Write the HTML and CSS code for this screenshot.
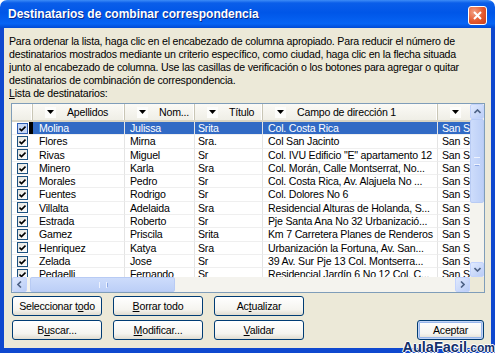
FILE: index.html
```html
<!DOCTYPE html>
<html lang="es">
<head>
    <meta charset="UTF-8">
    <title>Destinatarios de combinar correspondencia</title>
    <link rel="stylesheet" href="styles.css">
</head>
<body>
    <div class="window">
        <div class="titlebar">
            <span class="title">Destinatarios de combinar correspondencia</span>
            <span class="close">
                <svg width="9" height="9" viewBox="0 0 9 9"><path d="M1 1 L8 8 M8 1 L1 8" stroke="#fff" stroke-width="2" fill="none"/></svg>
            </span>
        </div>
        <div class="frame">
            <div class="client">
                <p class="intro">Para ordenar la lista, haga clic en el encabezado de columna apropiado. Para reducir el número de<br>destinatarios mostrados mediante un criterio específico, como ciudad, haga clic en la flecha situada<br>junto al encabezado de columna. Use las casillas de verificación o los botones para agregar o quitar<br>destinatarios de combinación de correspondencia.</p>
                <div class="list-label"><u>L</u>ista de destinatarios:</div>

                <div class="listbox">
                    <div class="list-top">
                        <div class="table">
                            <div class="row header">
                                <div class="hcell"></div>
                                <div class="hcell"><span class="drop"><svg width="7" height="4" viewBox="0 0 7 4"><path d="M0 0 H7 L3.5 4 Z"/></svg></span>Apellidos</div>
                                <div class="hcell"><span class="drop"><svg width="7" height="4" viewBox="0 0 7 4"><path d="M0 0 H7 L3.5 4 Z"/></svg></span>Nom...</div>
                                <div class="hcell"><span class="drop"><svg width="7" height="4" viewBox="0 0 7 4"><path d="M0 0 H7 L3.5 4 Z"/></svg></span>Título</div>
                                <div class="hcell"><span class="drop"><svg width="7" height="4" viewBox="0 0 7 4"><path d="M0 0 H7 L3.5 4 Z"/></svg></span>Campo de dirección 1</div>
                                <div class="hcell"><span class="drop"><svg width="7" height="4" viewBox="0 0 7 4"><path d="M0 0 H7 L3.5 4 Z"/></svg></span></div>
                            </div>

                            <div class="row selected">
                                <div class="cell check"><span class="box focus"><svg width="7" height="7" viewBox="0 0 7 7"><path d="M0.5 3.5 L2.5 5.5 L6.5 1.5" fill="none" stroke="#000" stroke-width="1.6"/></svg></span><span class="caret"></span></div>
                                <div class="cell">Molina</div><div class="cell">Julissa</div><div class="cell">Srita</div><div class="cell">Col. Costa Rica</div><div class="cell">San Salvador</div>
                            </div>
                            <div class="row">
                                <div class="cell check"><span class="box"><svg width="7" height="7" viewBox="0 0 7 7"><path d="M0.5 3.5 L2.5 5.5 L6.5 1.5" fill="none" stroke="#000" stroke-width="1.6"/></svg></span></div>
                                <div class="cell">Flores</div><div class="cell">Mirna</div><div class="cell">Sra.</div><div class="cell">Col San Jacinto</div><div class="cell">San Salvador</div>
                            </div>
                            <div class="row">
                                <div class="cell check"><span class="box"><svg width="7" height="7" viewBox="0 0 7 7"><path d="M0.5 3.5 L2.5 5.5 L6.5 1.5" fill="none" stroke="#000" stroke-width="1.6"/></svg></span></div>
                                <div class="cell">Rivas</div><div class="cell">Miguel</div><div class="cell">Sr</div><div class="cell">Col. IVU Edificio "E" apartamento 12</div><div class="cell">San Salvador</div>
                            </div>
                            <div class="row">
                                <div class="cell check"><span class="box"><svg width="7" height="7" viewBox="0 0 7 7"><path d="M0.5 3.5 L2.5 5.5 L6.5 1.5" fill="none" stroke="#000" stroke-width="1.6"/></svg></span></div>
                                <div class="cell">Minero</div><div class="cell">Karla</div><div class="cell">Sra</div><div class="cell">Col. Morán, Calle Montserrat, No...</div><div class="cell">San Salvador</div>
                            </div>
                            <div class="row">
                                <div class="cell check"><span class="box"><svg width="7" height="7" viewBox="0 0 7 7"><path d="M0.5 3.5 L2.5 5.5 L6.5 1.5" fill="none" stroke="#000" stroke-width="1.6"/></svg></span></div>
                                <div class="cell">Morales</div><div class="cell">Pedro</div><div class="cell">Sr</div><div class="cell">Col. Costa Rica, Av. Alajuela No ...</div><div class="cell">San Salvador</div>
                            </div>
                            <div class="row">
                                <div class="cell check"><span class="box"><svg width="7" height="7" viewBox="0 0 7 7"><path d="M0.5 3.5 L2.5 5.5 L6.5 1.5" fill="none" stroke="#000" stroke-width="1.6"/></svg></span></div>
                                <div class="cell">Fuentes</div><div class="cell">Rodrigo</div><div class="cell">Sr</div><div class="cell">Col. Dolores No 6</div><div class="cell">San Salvador</div>
                            </div>
                            <div class="row">
                                <div class="cell check"><span class="box"><svg width="7" height="7" viewBox="0 0 7 7"><path d="M0.5 3.5 L2.5 5.5 L6.5 1.5" fill="none" stroke="#000" stroke-width="1.6"/></svg></span></div>
                                <div class="cell">Villalta</div><div class="cell">Adelaida</div><div class="cell">Sra</div><div class="cell">Residencial Alturas de Holanda, S...</div><div class="cell">San Salvador</div>
                            </div>
                            <div class="row">
                                <div class="cell check"><span class="box"><svg width="7" height="7" viewBox="0 0 7 7"><path d="M0.5 3.5 L2.5 5.5 L6.5 1.5" fill="none" stroke="#000" stroke-width="1.6"/></svg></span></div>
                                <div class="cell">Estrada</div><div class="cell">Roberto</div><div class="cell">Sr</div><div class="cell">Pje Santa Ana No 32 Urbanizació...</div><div class="cell">San Salvador</div>
                            </div>
                            <div class="row">
                                <div class="cell check"><span class="box"><svg width="7" height="7" viewBox="0 0 7 7"><path d="M0.5 3.5 L2.5 5.5 L6.5 1.5" fill="none" stroke="#000" stroke-width="1.6"/></svg></span></div>
                                <div class="cell">Gamez</div><div class="cell">Priscila</div><div class="cell">Srita</div><div class="cell">Km 7 Carretera Planes de Renderos</div><div class="cell">San Salvador</div>
                            </div>
                            <div class="row">
                                <div class="cell check"><span class="box"><svg width="7" height="7" viewBox="0 0 7 7"><path d="M0.5 3.5 L2.5 5.5 L6.5 1.5" fill="none" stroke="#000" stroke-width="1.6"/></svg></span></div>
                                <div class="cell">Henriquez</div><div class="cell">Katya</div><div class="cell">Sra</div><div class="cell">Urbanización la Fortuna, Av. San...</div><div class="cell">San Salvador</div>
                            </div>
                            <div class="row">
                                <div class="cell check"><span class="box"><svg width="7" height="7" viewBox="0 0 7 7"><path d="M0.5 3.5 L2.5 5.5 L6.5 1.5" fill="none" stroke="#000" stroke-width="1.6"/></svg></span></div>
                                <div class="cell">Zelada</div><div class="cell">Jose</div><div class="cell">Sr</div><div class="cell">39 Av. Sur Pje 13 Col. Montserra...</div><div class="cell">San Salvador</div>
                            </div>
                            <div class="row">
                                <div class="cell check"><span class="box"><svg width="7" height="7" viewBox="0 0 7 7"><path d="M0.5 3.5 L2.5 5.5 L6.5 1.5" fill="none" stroke="#000" stroke-width="1.6"/></svg></span></div>
                                <div class="cell">Pedaelli</div><div class="cell">Fernando</div><div class="cell">Sr</div><div class="cell">Residencial Jardín 6 No 12 Col. C...</div><div class="cell">San Salvador</div>
                            </div>
                        </div>

                        <div class="vscroll">
                            <span class="sbtn"><svg width="7" height="5" viewBox="0 0 7 5"><path d="M0.5 4 L3.5 1 L6.5 4" fill="none" stroke="#4D6185" stroke-width="1.6"/></svg></span>
                            <span class="vthumb"><span class="grip-v"></span></span>
                            <span class="track"></span>
                            <span class="sbtn"><svg width="7" height="5" viewBox="0 0 7 5"><path d="M0.5 1 L3.5 4 L6.5 1" fill="none" stroke="#4D6185" stroke-width="1.6"/></svg></span>
                        </div>
                    </div>
                    <div class="list-bottom">
                        <div class="hscroll">
                            <span class="sbtn"><svg width="5" height="7" viewBox="0 0 5 7"><path d="M4 0.5 L1 3.5 L4 6.5" fill="none" stroke="#4D6185" stroke-width="1.6"/></svg></span>
                            <span class="hthumb"><span class="grip-h"></span></span>
                            <span class="track"></span>
                            <span class="sbtn"><svg width="5" height="7" viewBox="0 0 5 7"><path d="M1 0.5 L4 3.5 L1 6.5" fill="none" stroke="#4D6185" stroke-width="1.6"/></svg></span>
                        </div>
                        <div class="corner"></div>
                    </div>
                </div>

                <div class="actions">
                    <div class="btn-grid">
                        <button class="btn">Seleccionar t<u>o</u>do</button>
                        <button class="btn"><u>B</u>orrar todo</button>
                        <button class="btn">Ac<u>t</u>ualizar</button>
                        <button class="btn">B<u>u</u>scar...</button>
                        <button class="btn"><u>M</u>odificar...</button>
                        <button class="btn"><u>V</u>alidar</button>
                    </div>
                    <button class="btn default">Aceptar</button>
                </div>
            </div>
        </div>
        <div class="watermark">AulaFacil<span class="dotcom">.com</span></div>
    </div>
</body>
</html>
```

FILE: styles.css
```css
body {
    margin: 0;
    background: #fff;
    font-family: "Liberation Sans", Arial, sans-serif;
    font-size: 10.6px;
    letter-spacing: -0.2px;
    color: #000;
}

.window {
    width: 495px;
    height: 353px;
    display: flex;
    flex-direction: column;
    border-radius: 7px 7px 0 0;
    overflow: hidden;
    position: relative;
}

/* title bar */
.titlebar {
    height: 28px;
    flex: none;
    display: flex;
    align-items: center;
    justify-content: space-between;
    padding: 0 8px 0 8px;
    background: linear-gradient(#3d8cf7 0, #0a5ee9 3px, #0056e8 45%, #0664f4 85%, #004ad4 100%);
}

.title {
    color: #fff;
    font-weight: bold;
    font-size: 12px;
    letter-spacing: 0;
    text-shadow: 1px 1px 0 #0a2a8c;
}

.close {
    width: 17px;
    height: 17px;
    border: 1px solid #fff;
    border-radius: 3px;
    background: radial-gradient(circle at 30% 30%, #f3a083 0, #e3582e 55%, #c8401c 100%);
    display: flex;
    align-items: center;
    justify-content: center;
    margin-top: 3px;
}

/* window frame and client */
.frame {
    flex: 1;
    background: #0f48cf;
    padding: 0 4px 5px 4px;
    display: flex;
}

.client {
    flex: 1;
    min-width: 0;
    overflow: hidden;
    background: #ece9d8;
    padding: 7px 6px 0 5px;
}

.intro {
    margin: 0;
    line-height: 13px;
    white-space: nowrap;
}

.list-label {
    line-height: 13px;
}

/* list box */
.listbox {
    margin: 3px 0 0 2px;
    width: 474px;
    height: 190px;
    box-sizing: border-box;
    border: 1px solid #7f9db9;
    background: #fff;
    display: flex;
    flex-direction: column;
}

.list-top {
    display: flex;
    height: 173px;
}

.table {
    width: 458px;
    overflow: hidden;
}

.row {
    display: grid;
    grid-template-columns: 21px 92px 70px 68px 175px 60px;
    height: 13.3px;
    line-height: 13px;
}

.row.header {
    height: 18px;
    line-height: 15px;
    background: linear-gradient(#fbfaf6, #efeee6);
    border-bottom: 2px solid #d8d4c4;
    box-sizing: border-box;
}

.hcell {
    display: flex;
    align-items: center;
    padding-left: 12px;
    white-space: nowrap;
    overflow: hidden;
    border-right: 1px solid #c9c6b6;
    box-shadow: inset -1px 0 0 #fff;
}

.hcell:first-child {
    padding-left: 0;
}

.drop {
    width: 11px;
    height: 11px;
    flex: none;
    margin-right: 11px;
    background: #fdfdfb;
    display: flex;
    align-items: center;
    justify-content: center;
}

.cell {
    box-sizing: border-box;
    padding-left: 5px;
    white-space: nowrap;
    overflow: hidden;
    border-right: 1px solid #e4e4e4;
    border-bottom: 1px solid #efefef;
}

.cell:nth-child(2) {
    padding-left: 6px;
}

.cell:nth-child(4) {
    padding-left: 3px;
}

.cell:nth-child(6) {
    padding-left: 4px;
}

.selected .cell {
    background: #316ac5;
    color: #fff;
}

.selected .cell.check {
    background: #fff;
}

.cell.check {
    padding-left: 5px;
    display: flex;
    align-items: center;
    border-right: none;
}

.box {
    width: 11px;
    height: 11px;
    box-sizing: border-box;
    border: 1px solid #1c5180;
    background: linear-gradient(135deg, #e2e2dc, #fff);
    display: flex;
    align-items: center;
    justify-content: center;
}

.box.focus {
    border-color: #2f5fb5;
    background: #c6d7f5;
}

.caret {
    width: 4px;
    height: 12px;
    margin-left: 1px;
    background: #000;
}

/* scroll bars */
.vscroll {
    width: 14px;
    display: flex;
    flex-direction: column;
    background: #f4f3ee;
}

.hscroll {
    width: 458px;
    display: flex;
    background: #f4f3ee;
}

.sbtn {
    flex: none;
    width: 14px;
    height: 15px;
    box-sizing: border-box;
    border: 1px solid #c3d3fd;
    border-radius: 2px;
    background: linear-gradient(135deg, #e1eafe, #b9ccf6);
    display: flex;
    align-items: center;
    justify-content: center;
}

.hscroll .sbtn {
    width: 15px;
    height: 15px;
}

.vthumb {
    height: 84px;
    box-sizing: border-box;
    border: 1px solid #b8cbf4;
    border-radius: 2px;
    background: linear-gradient(90deg, #cddcfb, #bccff7);
    display: flex;
    align-items: center;
    justify-content: center;
}

.hthumb {
    width: 145px;
    margin-left: 3px;
    box-sizing: border-box;
    border: 1px solid #b8cbf4;
    border-radius: 2px;
    background: linear-gradient(#cddcfb, #bccff7);
    display: flex;
    align-items: center;
    justify-content: center;
}

.grip-v {
    width: 6px;
    height: 6px;
    border-top: 1px solid #eef3fe;
    border-bottom: 1px solid #eef3fe;
    box-shadow: 0 2px 0 -1px #8faae6;
}

.grip-h {
    width: 6px;
    height: 6px;
    border-left: 1px solid #eef3fe;
    border-right: 1px solid #eef3fe;
    box-shadow: 2px 0 0 -1px #8faae6;
}

.track {
    flex: 1;
}

.list-bottom {
    display: flex;
    height: 15px;
}

.corner {
    flex: 1;
    background: #ece9d8;
}

/* buttons */
.actions {
    display: flex;
    justify-content: space-between;
    align-items: flex-end;
    margin: 3px 1px 0 3px;
}

.btn-grid {
    display: grid;
    grid-template-columns: 90px 90px 90px;
    column-gap: 11px;
    row-gap: 4px;
}

.btn {
    height: 20px;
    padding: 0;
    border: 1px solid #003c74;
    border-radius: 3px;
    background: linear-gradient(#ffffff, #f5f4ef 70%, #e0dcd1 100%);
    font-family: "Liberation Sans", Arial, sans-serif;
    font-size: 10.6px;
    letter-spacing: -0.2px;
    color: #000;
}

.btn.default {
    width: 67px;
    box-shadow: inset 0 0 0 1px #c2d4f5, inset 0 0 0 2px #98b6eb;
}

.watermark {
    position: absolute;
    right: 0;
    bottom: -2px;
    font-weight: bold;
    font-size: 14.5px;
    letter-spacing: 0;
    color: #14306a;
    text-shadow: 1px 0 0 #fff, -1px 0 0 #fff, 0 1px 0 #fff, 0 -1px 0 #fff;
}

.dotcom {
    font-size: 12px;
}
```
